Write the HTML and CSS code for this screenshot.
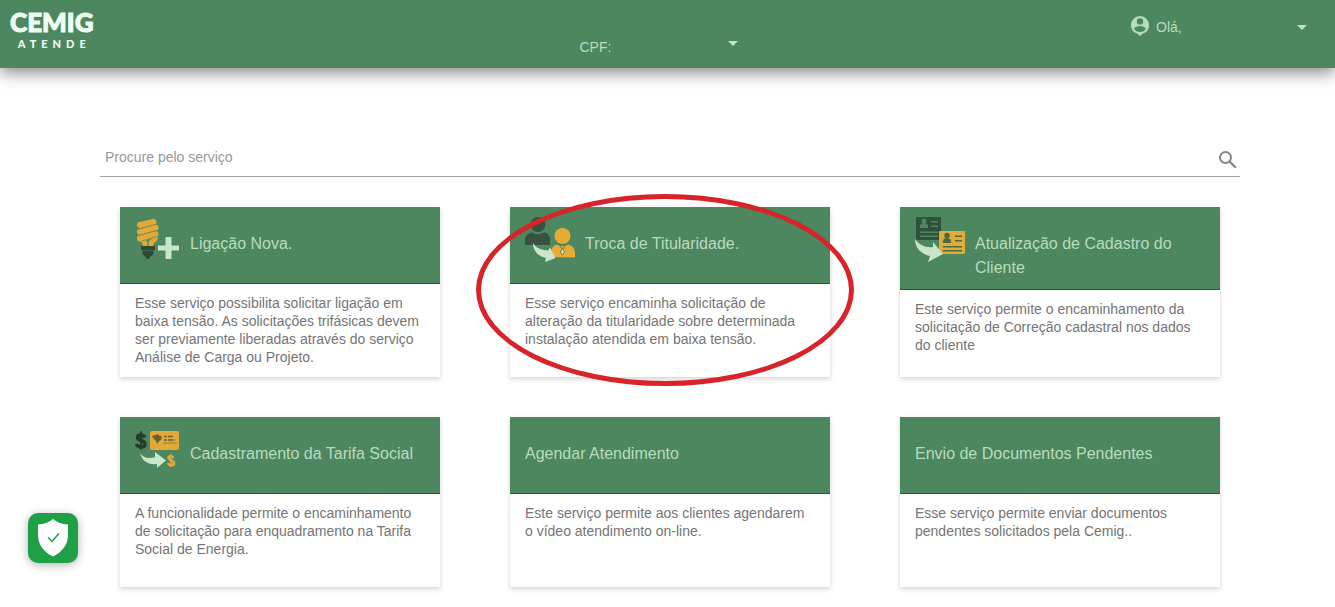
FILE: index.html
```html
<!DOCTYPE html>
<html lang="pt-BR">
<head>
    <meta charset="UTF-8">
    <meta name="viewport" content="width=device-width, initial-scale=1.0">
    <title>Cemig Atende</title>
    <link rel="stylesheet" href="styles.css">
</head>
<body>
    <header class="topbar">
        <a href="#" class="logo">
            <span class="logo-name">CEMIG</span>
            <span class="logo-sub">ATENDE</span>
        </a>
        <button type="button" class="menu-btn cpf-btn">
            <span>CPF:</span>
            <span class="caret"></span>
        </button>
        <button type="button" class="menu-btn user-btn">
            <svg class="user-icon" width="20" height="22" viewBox="0 0 20 22">
                <path fill="currentColor" fill-rule="evenodd" d="M10 1a9 9 0 0 0-9 9.200a9 9 0 0 0 6.500 8.600L10 21l2.500-2.200A9 9 0 0 0 19 10.200A9 9 0 0 0 10 1zM10 3.200a3.200 3.200 0 1 1 0 6.400a3.200 3.200 0 0 1 0-6.400zM4 14c1-2 3.500-2.900 6-2.900s5 .9 6 2.900c-1.200 1.900-3.500 3-6 3s-4.800-1.100-6-3z"/>
            </svg>
            <span>Olá,</span>
            <span class="caret"></span>
        </button>
    </header>

    <main class="content">
        <form class="search-bar">
            <input type="text" id="search" placeholder="Procure pelo serviço" aria-label="Procure pelo serviço">
            <button type="submit" class="search-btn" aria-label="Procurar">
                <svg width="18" height="18" viewBox="0 0 18 18" fill="none" stroke="currentColor">
                    <circle cx="6.500" cy="6.500" r="5.500" stroke-width="2"/>
                    <path d="M10.800 10.800L16.800 16.800" stroke-width="2.300"/>
                </svg>
            </button>
        </form>

        <div class="services">
            <article class="card">
                <div class="card-header">
                    <!-- lamp -->
                    <svg width="45" height="45" viewBox="0 0 45 45">
                        <g fill="none" stroke="#e2a938" stroke-width="6" stroke-linecap="round" stroke-linejoin="round">
                            <path d="M5 8L18.500 5"/>
                            <path d="M5 15L20.500 10.500"/>
                            <path d="M5 21.500L20.500 17"/>
                            <path d="M7.500 22l2.500 4v1M20.500 21l-4.500 5v1" stroke-width="5"/>
                        </g>
                        <path d="M3 12.200L22 7M3 18.700L22 13.400M7 24L22 19.500" stroke="#7d8c4c" stroke-width="1"/>
                        <path fill="#2d4a36" d="M6 29h14v4h-1.500v4l-3 2.500L14 42h-2l-2-2.500L7.500 37v-4H6z"/>
                        <path stroke="#41684b" stroke-width="1" d="M7 33.500h12"/>
                        <path fill="#c9e6cb" d="M30.500 20h6v8.500H44v5h-7.500V42h-6v-8.500H23v-5h7.500z"/>
                    </svg>
                    <h2>Ligação Nova.</h2>
                </div>
                <p>Esse serviço possibilita solicitar ligação em baixa tensão. As solicitações trifásicas devem ser previamente liberadas através do serviço Análise de Carga ou Projeto.</p>
            </article>

            <article class="card highlighted">
                <div class="card-header">
                    <!-- two people -->
                    <svg width="50" height="45" viewBox="0 0 50 45">
                        <g fill="#37533f">
                            <circle cx="13" cy="7.500" r="7.500"/>
                            <path d="M0 28v-5c0-4 3-7 7-7.500c3 2.300 9 2.300 12 0c4 .5 6 3 6 7v5.500z"/>
                        </g>
                        <g fill="#e8ac35">
                            <circle cx="37.500" cy="19" r="8"/>
                            <path d="M26 40v-5c0-4 2.500-6.500 6-7.500c3 2 8 2 11 0c4 1 7 4 7 8v5z"/>
                        </g>
                        <path d="M34 28l3.500 4L41 28" fill="none" stroke="#6d8148" stroke-width="1"/>
                        <path d="M37.500 31l2 4-2 3-2-3z" fill="#c9e6cb" stroke="#6d8148"/>
                        <path d="M8 26c3 5 8 7 15 7.500l2-3L30.500 41L20 45l1-4C13 39 8 34 8 26z" fill="#c9e6cb"/>
                    </svg>
                    <h2>Troca de Titularidade.</h2>
                </div>
                <p>Esse serviço encaminha solicitação de alteração da titularidade sobre determinada instalação atendida em baixa tensão.</p>
            </article>

            <article class="card">
                <div class="card-header">
                    <!-- id cards -->
                    <svg width="50" height="45" viewBox="0 0 50 45">
                        <rect x="1" width="25" height="23" rx="1" fill="#31503b"/>
                        <g fill="#4c8760">
                            <circle cx="9" cy="4" r="2.500"/>
                            <path d="M5 11V9c0-2 2-3 4-3s4 1 4 3v2z"/>
                            <path d="M16 4h7v1.500h-7zM16 8.500h7V10h-7zM5 14.500h18V16H5zM5 18.500h18V20H5z"/>
                        </g>
                        <rect x="24" y="14" width="26" height="23" rx="1" fill="#e2aa37"/>
                        <g fill="#496b43">
                            <circle cx="32" cy="18.500" r="2.700"/>
                            <path d="M28 26v-2c0-2 2-3 4-3s4 1 4 3v2z"/>
                            <path d="M40 18.500h7V20h-7zM40 23h7v1.500h-7zM28 29h19v1.500H28zM28 33h19v1.500H28z"/>
                        </g>
                        <path d="M0 22c4 6 11 9 18 8V25L28 37L13 45l2-6C6 37 0 31 0 22z" fill="#c9e6cb"/>
                    </svg>
                    <h2>Atualização de Cadastro do Cliente</h2>
                </div>
                <p>Este serviço permite o encaminhamento da solicitação de Correção cadastral nos dados do cliente</p>
            </article>

            <article class="card">
                <div class="card-header">
                    <!-- money and benefit card -->
                    <svg width="45" height="45" viewBox="0 0 45 45">
                        <g fill="none" stroke="#233d2b" stroke-width="3.500">
                            <path d="M10 10.500C8.500 7 2.500 7 2.500 10.500c0 3.500 7.500 2.500 7.500 6.500s-7 4-8.500 0"/>
                            <path d="M6 4.500V22.500" stroke-width="2"/>
                        </g>
                        <rect x="15" y="4" width="29" height="19" rx="2" fill="#e2a938"/>
                        <path fill="#67602f" d="M17 9l4-1 2-1 1 1.500 3 1-1 3.500-2 1-2 3-1-3-3-3z"/>
                        <path stroke="#735f2d" stroke-width="1.500" stroke-dasharray="3 1 5 1" d="M29 9.500h10M29 13h11"/>
                        <path stroke="#8f7d38" d="M28 16h14"/>
                        <path d="M5 26c3 5 9 6 15 4v-5L31 33.500L22 41v-4C13 38 7 34 5 26z" fill="#c9e6cb"/>
                        <g fill="none" stroke="#e2a938" stroke-width="2.500">
                            <path d="M38.500 31c-1-2.500-5-2.500-5 0c0 2.500 5.500 2 5.500 5s-5 3-6 0"/>
                            <path d="M36 27v13" stroke-width="1.500"/>
                        </g>
                    </svg>
                    <h2>Cadastramento da Tarifa Social</h2>
                </div>
                <p>A funcionalidade permite o encaminhamento de solicitação para enquadramento na Tarifa Social de Energia.</p>
            </article>

            <article class="card">
                <div class="card-header">
                    <h2>Agendar Atendimento</h2>
                </div>
                <p>Este serviço permite aos clientes agendarem o vídeo atendimento on-line.</p>
            </article>

            <article class="card">
                <div class="card-header">
                    <h2>Envio de Documentos Pendentes</h2>
                </div>
                <p>Esse serviço permite enviar documentos pendentes solicitados pela Cemig..</p>
            </article>
        </div>
    </main>

    <button type="button" class="privacy-btn" aria-label="Privacidade">
        <svg width="30" height="38" viewBox="0 0 30 38">
            <path fill="#fff" d="M15 0c4 3.500 9 5 15 5.500V16c0 10-6 17-15 21.500C6 33 0 26 0 16V5.500C6 5 11 3.500 15 0z"/>
            <path fill="none" stroke="#20a046" stroke-width="1.500" d="M10 18.500l4 4L21 14.500"/>
        </svg>
    </button>
</body>
</html>
```
FILE: styles.css
```css
* {
    box-sizing: border-box;
}

body {
    font-family: "Liberation Sans", Arial, sans-serif;
    font-size: 14px;
    line-height: 18px;
    margin: 0;
    color: #757575;
    background-color: #fff;
}

button {
    font: inherit;
    border: none;
    padding: 0;
    background: none;
    cursor: pointer;
}

/* Top bar */
.topbar {
    display: grid;
    grid-template-columns: 1fr 158px 1fr;
    height: 68px;
    padding: 0 28px 0 10px;
    background-color: #4c8760;
    color: #b9dcbd;
    box-shadow: 0 4px 16px rgba(0, 0, 0, 0.5);
}

.logo {
    justify-self: start;
    display: flex;
    flex-direction: column;
    align-items: center;
    padding-top: 8px;
    color: #effff2;
    text-decoration: none;
}

.logo-name {
    font-family: Lato, sans-serif;
    font-size: 26px;
    font-weight: 900;
    line-height: 28px;
    -webkit-text-stroke: 1px #effff2;
}

.logo-sub {
    font-family: Lato, sans-serif;
    font-size: 11px;
    font-weight: 900;
    line-height: 16px;
    letter-spacing: 5px;
    padding-left: 5px;
}

.menu-btn {
    display: flex;
    align-items: center;
    color: inherit;
}

.cpf-btn {
    align-self: end;
    margin-bottom: 12px;
}

.user-btn {
    align-self: start;
    justify-self: end;
    width: 177px;
    margin-top: 15px;
}

.user-icon {
    margin-right: 6px;
    margin-bottom: 2px;
}

.caret {
    margin-left: auto;
    border: 5px solid transparent;
    border-top-color: #c3e3c6;
    border-bottom: none;
}

.cpf-btn .caret {
    margin-bottom: 7px;
}

/* Search */
.content {
    padding: 72px 95px 20px 100px;
}

.search-bar {
    display: flex;
    align-items: center;
    height: 37px;
    padding: 0 3px 3px 5px;
    border-bottom: 1px solid #a3a3a3;
}

.search-bar input {
    flex: 1;
    font: inherit;
    color: #757575;
    padding: 0;
    border: none;
    outline: none;
}

.search-bar input::placeholder {
    color: #999;
}

.search-btn {
    display: flex;
    color: #858585;
    padding-top: 6px;
}

/* Services */
.services {
    display: grid;
    grid-template-columns: repeat(3, 1fr);
    gap: 40px 70px;
    padding: 30px 20px 0;
}

.card {
    position: relative;
    min-height: 170px;
    background-color: #fff;
    box-shadow: 0 2px 5px rgba(0, 0, 0, 0.18);
}

.card-header {
    display: flex;
    gap: 10px;
    min-height: 77px;
    padding: 10px 15px 9px;
    background-color: #4c8760;
    border-bottom: 1px solid #3d4d42;
}

.card-header svg {
    flex-shrink: 0;
}

.card-header h2 {
    margin: 0;
    padding-top: 15px;
    font-size: 16px;
    font-weight: 300;
    line-height: 24px;
    color: #b9dcbd;
}

.card p {
    margin: 0;
    padding: 10px 15px;
}

/* Red ring round the card */
.highlighted::after {
    content: "";
    position: absolute;
    inset: -13px -24px -9px -34px;
    border: 5px solid #d8232a;
    border-radius: 50%;
    pointer-events: none;
}

.privacy-btn {
    position: fixed;
    left: 28px;
    bottom: 44px;
    display: flex;
    align-items: center;
    justify-content: center;
    width: 50px;
    height: 50px;
    border-radius: 10px;
    background-color: #20a046;
    box-shadow: 0 2px 10px rgba(0, 0, 0, 0.3);
}
```
